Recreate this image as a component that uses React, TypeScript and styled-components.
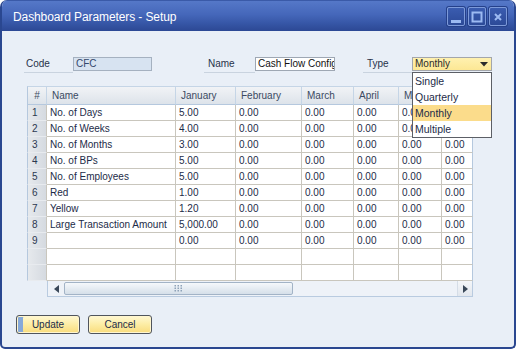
import React from "react";
import styled, { createGlobalStyle, css } from "styled-components";

const Global = createGlobalStyle`
  html, body { margin: 0; padding: 0; background: #ffffff; }
  body { font-family: "Liberation Sans", Arial, sans-serif; }
  * { box-sizing: border-box; }
`;

const Window = styled.div`
  width: 516px;
  height: 349px;
  display: flex;
  flex-direction: column;
  border: 2px solid #2a4790;
  border-top: none;
  border-radius: 7px 7px 5px 5px;
  overflow: hidden;
  background: #e9eff7;
`;

const TitleBar = styled.div`
  height: 31px;
  flex-shrink: 0;
  display: flex;
  align-items: center;
  padding: 0 7px 0 11px;
  background: linear-gradient(#5578c8 0%, #4567ba 45%, #3656a6 75%, #2c4894 100%);
  border-top: 1px solid #3a5aa8;
`;

const Title = styled.div`
  color: #ffffff;
  font-size: 12px;
  letter-spacing: -0.1px;
  flex: 1;
  padding-top: 1px;
`;

const Controls = styled.div`
  display: flex;
  gap: 3px;
  margin-top: 1px;
`;

const CtrlButton = styled.div`
  width: 18px;
  height: 19px;
  border: 1px solid #7d9ad9;
  border-radius: 2px;
  background: linear-gradient(#3a5cb0, #2c4a98);
  box-shadow: 0 0 0 1px #25408a;
  display: flex;
  align-items: center;
  justify-content: center;
`;

const Body = styled.div`
  flex: 1;
  padding-top: 26px;
  display: flex;
  flex-direction: column;
`;

const FieldsRow = styled.div`
  display: flex;
  align-items: flex-start;
  height: 16px;
  padding-left: 22px;
  font-size: 10px;
  color: #27324a;
`;

const LabelCell = styled.div<{ $w: number; $ml?: number }>`
  width: ${(p) => p.$w}px;
  margin-left: ${(p) => p.$ml ?? 0}px;
  height: 16px;
  line-height: 14px;
  padding-left: ${(p) => (p.$ml ? 4 : 2)}px;
  border-bottom: 1px solid #c9d3df;
`;

const TextBox = styled.div<{ $w: number; $readonly?: boolean }>`
  width: ${(p) => p.$w}px;
  height: 14px;
  line-height: 12px;
  padding-left: 2px;
  border: 1px solid ${(p) => (p.$readonly ? "#a5b1c0" : "#9ea7b3")};
  background: ${(p) => (p.$readonly ? "#d7e3f1" : "#ffffff")};
  color: ${(p) => (p.$readonly ? "#34486c" : "#111111")};
  white-space: nowrap;
  overflow: hidden;
`;

const SelectWrap = styled.div`
  position: relative;
  width: 80px;
`;

const SelectBox = styled.div`
  height: 14px;
  line-height: 12px;
  padding-left: 2px;
  border: 1px solid #a3a6ab;
  background: linear-gradient(#fff1b0, #fce794);
  color: #2a2a2a;
  display: flex;
  align-items: center;
  justify-content: space-between;
  padding-right: 3px;
`;

const DropList = styled.div`
  position: absolute;
  top: 15px;
  left: 0;
  width: 80px;
  border: 1px solid #5c5f66;
  background: #ffffff;
  z-index: 5;
`;

const DropItem = styled.div<{ $active?: boolean }>`
  height: 16px;
  line-height: 16px;
  padding-left: 2px;
  font-size: 10.5px;
  color: #1c2b48;
  background: ${(p) => (p.$active ? "#fbdc8b" : "#ffffff")};
`;

const TableArea = styled.div`
  margin: 13px 0 0 25px;
  width: 446px;
`;

const Grid = styled.div`
  display: grid;
  grid-template-columns: 20px 129px 60px 66px 52px 45px 43px 31px;
  grid-template-rows: 19px;
  grid-auto-rows: 16px;
  font-size: 10px;
`;

const HeadCell = styled.div<{ $first?: boolean; $last?: boolean }>`
  background: linear-gradient(#f1f3f6, #dde3ea);
  border-right: 1px solid ${(p) => (p.$last ? "#b5c8de" : "#c5d5e6")};
  border-bottom: 1px solid #b5c8de;
  border-top: 1px solid #c5d5e6;
  color: #3b4a62;
  line-height: 17px;
  padding-left: 5px;
  white-space: nowrap;
  overflow: hidden;
  ${(p) =>
    p.$first &&
    css`
      border-left: 1px solid #b5c8de;
      text-align: center;
      padding-left: 0;
    `}
`;

const RowHead = styled.div`
  border-left: 1px solid #b5c8de;
  border-right: 1px solid #c9c6bd;
  border-bottom: 1px solid #e8ebef;
  background: linear-gradient(90deg, #e6e9ed 0%, #d5dae0 100%);
  color: #2c3850;
  line-height: 15px;
  padding-left: 4px;
`;

const Cell = styled.div<{ $last?: boolean }>`
  background: #ffffff;
  border-right: 1px solid ${(p) => (p.$last ? "#b5c8de" : "#c9c6bd")};
  border-bottom: 1px solid #c9c6bd;
  color: #1c2b48;
  line-height: 15px;
  padding-left: 3px;
  white-space: nowrap;
  overflow: hidden;
`;

const HScroll = styled.div`
  margin-left: 20px;
  width: 426px;
  height: 16px;
  display: flex;
  align-items: center;
  border: 1px solid #b9cbe0;
  border-top: none;
  background: #eef2f8;
`;

const ArrowBtn = styled.div<{ $raised?: boolean }>`
  width: ${(p) => (p.$raised ? 15 : 16)}px;
  height: ${(p) => (p.$raised ? 15 : 14)}px;
  display: flex;
  align-items: center;
  justify-content: center;
  ${(p) =>
    p.$raised &&
    css`
      background: linear-gradient(#f4f6f9, #e2e7ee);
      border-left: 1px solid #d5dde7;
    `}
`;

const Thumb = styled.div`
  width: 229px;
  height: 13px;
  border: 1px solid #a2b3c6;
  border-radius: 2px;
  background: linear-gradient(#f5f8fb, #d5dfe9);
  display: flex;
  align-items: center;
  justify-content: center;
`;

const Track = styled.div`
  flex: 1;
`;

const ButtonRow = styled.div`
  display: flex;
  gap: 8px;
  padding-left: 14px;
  margin-top: 18px;
`;

const Button = styled.button<{ $focus?: boolean }>`
  width: 64px;
  height: 19px;
  padding: 0;
  border: 1px solid #50555d;
  border-radius: 3px;
  font-family: "Liberation Sans", Arial, sans-serif;
  font-size: 10px;
  color: #1c2b48;
  background: linear-gradient(#fff8d2 0%, #fdeea8 45%, #f9dc7c 100%);
  box-shadow: inset 0 0 0 1px #fff6cf${(p) => (p.$focus ? ", inset 6px 0 0 #86a9d9" : "")};
`;

const rows: [string, string][] = [
  ["No. of Days", "5.00"],
  ["No. of Weeks", "4.00"],
  ["No. of Months", "3.00"],
  ["No. of BPs", "5.00"],
  ["No. of Employees", "5.00"],
  ["Red", "1.00"],
  ["Yellow", "1.20"],
  ["Large Transaction Amount", "5,000.00"],
  ["", "0.00"],
];

const headers = ["Name", "January", "February", "March", "April", "May", "June"];

const Grip = () => (
  <svg width="9" height="7" viewBox="0 0 9 7">
    {[0, 3, 6].map((x) =>
      [0, 2.5, 5].map((y) => <rect key={`${x}-${y}`} x={x + 0.5} y={y} width="1.5" height="1.5" fill="#8ea2b8" />)
    )}
  </svg>
);

export default function App() {
  return (
    <>
      <Global />
      <Window>
        <TitleBar>
          <Title>Dashboard Parameters - Setup</Title>
          <Controls>
            <CtrlButton>
              <svg width="12" height="14" viewBox="0 0 12 14">
                <rect x="1" y="10" width="10" height="3" fill="#9cbaf2" />
              </svg>
            </CtrlButton>
            <CtrlButton>
              <svg width="12" height="14" viewBox="0 0 12 14">
                <rect x="1.5" y="2.5" width="9" height="9" fill="none" stroke="#9cbaf2" strokeWidth="2" />
              </svg>
            </CtrlButton>
            <CtrlButton>
              <svg width="12" height="14" viewBox="0 0 12 14">
                <path d="M3 4 L9 10 M9 4 L3 10" stroke="#9cbaf2" strokeWidth="2" />
              </svg>
            </CtrlButton>
          </Controls>
        </TitleBar>
        <Body>
          <FieldsRow>
            <LabelCell $w={49}>Code</LabelCell>
            <TextBox $w={79} $readonly>
              CFC
            </TextBox>
            <LabelCell $w={51} $ml={52}>Name</LabelCell>
            <TextBox $w={80}>Cash Flow Config</TextBox>
            <LabelCell $w={49} $ml={28}>Type</LabelCell>
            <SelectWrap>
              <SelectBox>
                <span>Monthly</span>
                <svg width="8" height="5" viewBox="0 0 8 5">
                  <path d="M0 0 L8 0 L4 4.5 Z" fill="#2b2b2b" />
                </svg>
              </SelectBox>
              <DropList>
                <DropItem>Single</DropItem>
                <DropItem>Quarterly</DropItem>
                <DropItem $active>Monthly</DropItem>
                <DropItem>Multiple</DropItem>
              </DropList>
            </SelectWrap>
          </FieldsRow>
          <TableArea>
            <Grid>
              <HeadCell $first>#</HeadCell>
              {headers.map((h, i) => (
                <HeadCell key={h} $last={i === headers.length - 1}>
                  {h}
                </HeadCell>
              ))}
              {rows.map(([name, jan], r) => (
                <React.Fragment key={r}>
                  <RowHead>{r + 1}</RowHead>
                  <Cell>{name}</Cell>
                  <Cell>{jan}</Cell>
                  {[0, 1, 2, 3, 4].map((c) => (
                    <Cell key={c} $last={c === 4}>
                      0.00
                    </Cell>
                  ))}
                </React.Fragment>
              ))}
              {[0, 1].map((r) => (
                <React.Fragment key={`e${r}`}>
                  <RowHead />
                  {[0, 1, 2, 3, 4, 5, 6].map((c) => (
                    <Cell key={c} $last={c === 6} />
                  ))}
                </React.Fragment>
              ))}
            </Grid>
            <HScroll>
              <ArrowBtn>
                <svg width="5" height="8" viewBox="0 0 5 8">
                  <path d="M5 0 L5 8 L0 4 Z" fill="#3a4859" />
                </svg>
              </ArrowBtn>
              <Thumb>
                <Grip />
              </Thumb>
              <Track />
              <ArrowBtn $raised>
                <svg width="5" height="8" viewBox="0 0 5 8">
                  <path d="M0 0 L0 8 L5 4 Z" fill="#3a4859" />
                </svg>
              </ArrowBtn>
            </HScroll>
          </TableArea>
          <ButtonRow>
            <Button $focus>Update</Button>
            <Button>Cancel</Button>
          </ButtonRow>
        </Body>
      </Window>
    </>
  );
}
